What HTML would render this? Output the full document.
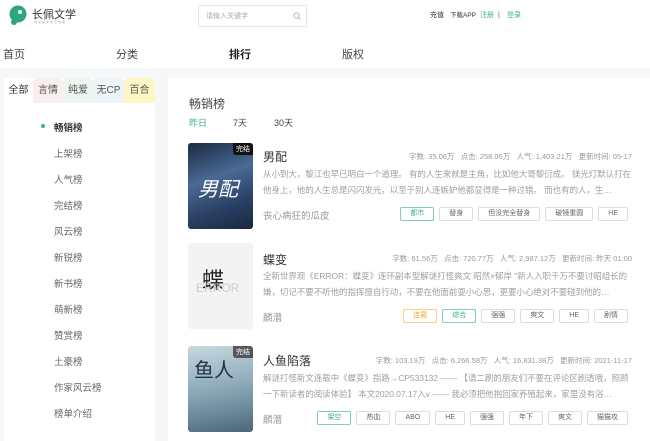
<!DOCTYPE html><html><head><meta charset="utf-8"><style>
*{margin:0;padding:0;box-sizing:border-box}
body{width:650px;height:441px;overflow:hidden;background:#fff;font-family:"Liberation Sans","Noto Sans CJK SC",sans-serif;color:#333;position:relative}
.a{position:absolute;white-space:nowrap}
.gray{position:absolute;left:0;top:68px;width:650px;height:373px;background:#f6f7f9}
.lp{position:absolute;left:4px;top:78px;width:151px;height:363px;background:#fff}
.rp{position:absolute;left:168px;top:78px;width:482px;height:363px;background:#fff}
.tab{position:absolute;top:0;height:25px;line-height:25px;font-size:10px;text-align:center;color:#555;border-radius:4px 4px 0 0}
.mi{position:absolute;left:50px;font-size:9.5px;color:#666}
.cov{position:absolute;left:20px;width:65px;height:86px;border-radius:3px;overflow:hidden}
.t{font-size:12px;color:#333}
.st{font-size:7.5px;color:#999;text-align:right;right:18px}
.d{font-size:8.5px;color:#a0a0a0;left:95px;width:372px;height:31px;overflow:hidden;line-height:15.5px;white-space:normal;letter-spacing:-0.05px}
.au{font-size:9.5px;color:#999;left:95px}
.tags{position:absolute;right:22px;display:flex;gap:5px}
.tg{height:14px;line-height:12px;font-size:7px;color:#666;border:1px solid #ddd;border-radius:2px;padding:0 9px}
.g{color:#3bb38a;border-color:#7fd0b0}
.o{color:#f5a623;border-color:#f7cf86}
.bd{position:absolute;right:0;top:0;background:rgba(50,50,50,.75);color:#fff;font-size:7px;padding:1px 3px;border-radius:0 0 0 3px}
.hl{font-size:7px;top:11px;line-height:9px}
</style></head><body>
<svg class="a" style="left:8px;top:5px" width="19" height="20" viewBox="0 0 19 20"><circle cx="10" cy="9" r="8.5" fill="#2fa57c"/><circle cx="6" cy="17" r="3" fill="#2fa57c"/><circle cx="12" cy="7" r="2" fill="#fff"/></svg>
<div class="a" style="left:32px;top:6px;font-size:11px;color:#333">长佩文学</div>
<div class="a" style="left:34px;top:20px;font-size:3px;color:#aaa;letter-spacing:1px">阅读是件快乐的事</div>
<div class="a" style="left:198px;top:5px;width:109px;height:22px;border:1px solid #e5e5e5;border-radius:2px"></div>
<div class="a" style="left:206px;top:11px;font-size:7px;color:#aaa">请输入关键字</div>
<svg class="a" style="left:293px;top:12px" width="8" height="8"><circle cx="3.5" cy="3.5" r="2.7" stroke="#bbb" fill="none"/><path d="M5.5 5.5L7.5 7.5" stroke="#bbb"/></svg>
<div class="a hl" style="left:430px;color:#333">充值</div>
<div class="a hl" style="left:450px;color:#333;font-size:6.5px">下载APP</div>
<div class="a hl" style="left:480px;color:#3bb38a">注册</div>
<div class="a hl" style="left:498px;color:#666">|</div>
<div class="a hl" style="left:507px;color:#3bb38a">登录</div>
<div class="a" style="left:3px;top:46px;font-size:11px;color:#444">首页</div>
<div class="a" style="left:116px;top:46px;font-size:11px;color:#444">分类</div>
<div class="a" style="left:229px;top:46px;font-size:11px;color:#222;font-weight:bold">排行</div>
<div class="a" style="left:342px;top:46px;font-size:11px;color:#444">版权</div>
<div class="gray"></div>
<div class="lp">
<div class="tab" style="left:0;width:29px;background:#fff;color:#333">全部</div>
<div class="tab" style="left:29px;width:30px;background:#fbeeee">言情</div>
<div class="tab" style="left:59px;width:30px;background:#eef6f0">纯爱</div>
<div class="tab" style="left:89px;width:31px;background:#eef5f8">无CP</div>
<div class="tab" style="left:120px;width:31px;background:#fdf7c6">百合</div>
<div class="a" style="left:37px;top:46px;width:4px;height:4px;border-radius:2px;background:#3bb38a"></div>
<div class="mi" style="top:42px;color:#333;font-weight:bold">畅销榜</div>
<div class="mi" style="top:68px">上架榜</div>
<div class="mi" style="top:94px">人气榜</div>
<div class="mi" style="top:120px">完结榜</div>
<div class="mi" style="top:146px">风云榜</div>
<div class="mi" style="top:172px">新锐榜</div>
<div class="mi" style="top:198px">新书榜</div>
<div class="mi" style="top:224px">萌新榜</div>
<div class="mi" style="top:250px">赞赏榜</div>
<div class="mi" style="top:276px">土豪榜</div>
<div class="mi" style="top:302px">作家风云榜</div>
<div class="mi" style="top:328px">榜单介绍</div>
</div>
<div class="rp">
<div class="a" style="left:21px;top:17px;font-size:12px;color:#444">畅销榜</div>
<div class="a" style="left:21px;top:38px;font-size:9px;color:#3bb38a">昨日</div>
<div class="a" style="left:65px;top:38px;font-size:9px;color:#444">7天</div>
<div class="a" style="left:106px;top:38px;font-size:9px;color:#444">30天</div>

<div class="cov" style="top:65px;background:linear-gradient(160deg,#1a2a44,#4a6a94 40%,#2a4266 70%,#1a2840)"><div class="bd" style="background:#111">完结</div><div class="a" style="left:10px;top:30px;font-size:20px;color:#fff;font-style:italic">男配</div></div>
<div class="a t" style="left:95px;top:70px">男配</div>
<div class="a st" style="top:73px">字数: 35.06万 &nbsp; 点击: 258.06万 &nbsp; 人气: 1,403.21万 &nbsp; 更新时间: 05-17</div>
<div class="a d" style="top:89px">从小到大，黎江也早已明白一个道理。 有的人生来就是主角，比如他大哥黎衍成。 镁光灯默认打在他身上，他的人生总是闪闪发光，以至于别人连嫉妒他都显得是一种过错。 而也有的人，生…</div>
<div class="a au" style="top:130px">丧心病狂的瓜皮</div>
<div class="tags" style="top:129px"><span class="tg g">都市</span><span class="tg">替身</span><span class="tg">但没完全替身</span><span class="tg">破镜重圆</span><span class="tg">HE</span></div>

<div class="cov" style="top:165px;background:#f3f3f3"><div class="a" style="left:14px;top:20px;font-size:22px;color:#222">蝶</div><div class="a" style="left:8px;top:38px;font-size:12px;color:#ccc">ERROR</div></div>
<div class="a t" style="left:95px;top:173px">蝶变</div>
<div class="a st" style="top:175px">字数: 61.56万 &nbsp; 点击: 720.77万 &nbsp; 人气: 2,987.12万 &nbsp; 更新时间: 昨天 01:00</div>
<div class="a d" style="top:191px">全新世界观《ERROR：蝶变》连环副本型解谜打怪爽文 昭然×郁岸 "新人入职千万不要讨昭组长的嫌，切记不要不听他的指挥擅自行动，不要在他面前耍小心思，更要小心绝对不要碰到他的…</div>
<div class="a au" style="top:232px">麟潜</div>
<div class="tags" style="top:231px"><span class="tg o">连载</span><span class="tg g">综合</span><span class="tg">强强</span><span class="tg">爽文</span><span class="tg">HE</span><span class="tg">剧情</span></div>

<div class="cov" style="top:268px;background:linear-gradient(170deg,#c8d8e0,#8aa8b8 50%,#4a6878)"><div class="bd">完结</div><div class="a" style="left:6px;top:8px;font-size:20px;color:#234">鱼人</div></div>
<div class="a t" style="left:95px;top:274px">人鱼陷落</div>
<div class="a st" style="top:277px">字数: 103.19万 &nbsp; 点击: 6,266.58万 &nbsp; 人气: 16,831.38万 &nbsp; 更新时间: 2021-11-17</div>
<div class="a d" style="top:293px">解谜打怪新文连载中《蝶变》指路→CP533132 —— 【请二刷的朋友们不要在评论区剧透哦，照顾一下新读者的阅读体验】 本文2020.07.17入v —— 我必须把他抱回家养殖起来，家里没有浴…</div>
<div class="a au" style="top:334px">麟潜</div>
<div class="tags" style="top:333px"><span class="tg g">架空</span><span class="tg">热血</span><span class="tg">ABO</span><span class="tg">HE</span><span class="tg">强强</span><span class="tg">年下</span><span class="tg">爽文</span><span class="tg">猫猫攻</span></div>
</div>
</body></html>
